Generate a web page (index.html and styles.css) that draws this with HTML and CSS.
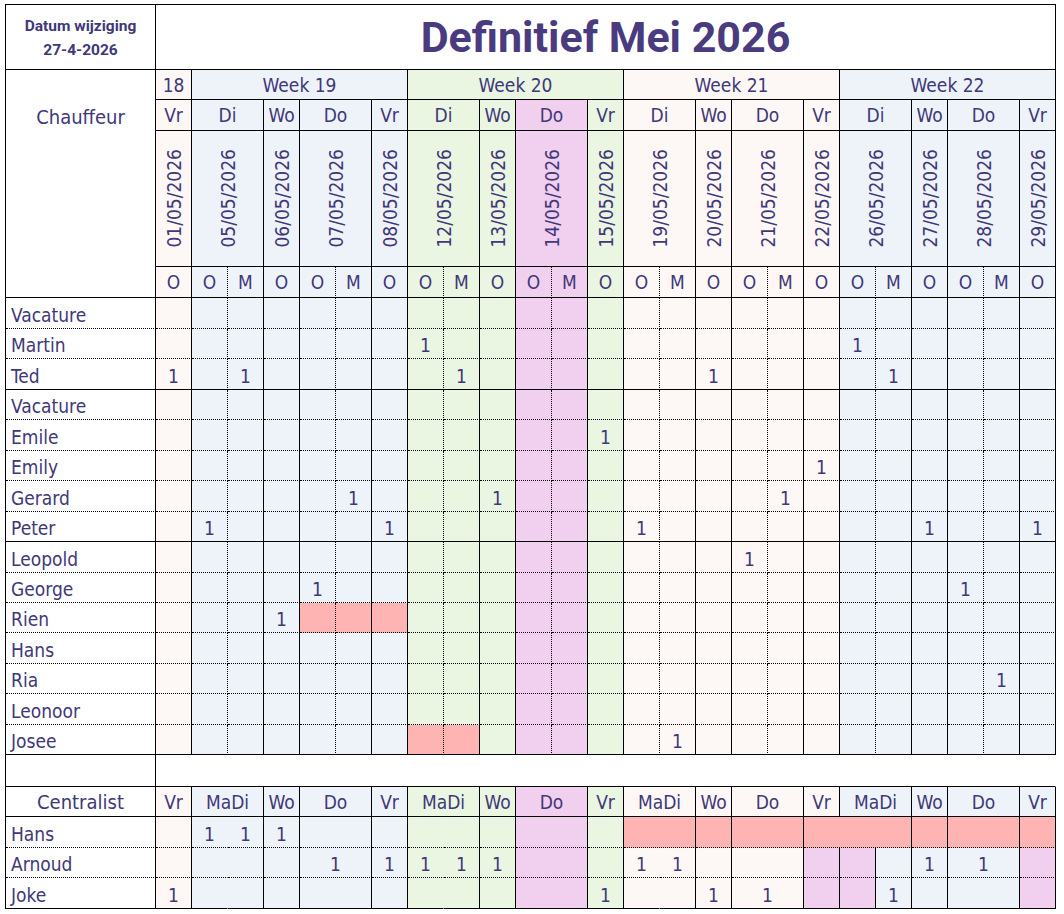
FILE: index.html
```html
<!DOCTYPE html>
<html lang="nl">
<head>
<meta charset="utf-8">
<title>Definitief Mei 2026</title>
<link rel="stylesheet" href="styles.css">
</head>
<body>
<div class="sheet">
  <div class="datum"><span>Datum wijziging</span><span>27-4-2026</span></div>
  <div class="title s25">Definitief Mei 2026</div>

  <div class="chauf">Chauffeur</div>
  <div class="pe">18</div><div class="bl s6">Week 19</div><div class="gr s6">Week 20</div><div class="pe s6">Week 21</div><div class="bl s6">Week 22</div>

  <div class="pe">Vr</div><div class="bl s2">Di</div><div class="bl">Wo</div><div class="bl s2">Do</div><div class="bl">Vr</div>
  <div class="gr s2">Di</div><div class="gr">Wo</div><div class="pk s2">Do</div><div class="gr">Vr</div>
  <div class="pe s2">Di</div><div class="pe">Wo</div><div class="pe s2">Do</div><div class="pe">Vr</div>
  <div class="bl s2">Di</div><div class="bl">Wo</div><div class="bl s2">Do</div><div class="bl">Vr</div>

  <div class="pe d"><span>01/05/2026</span></div><div class="bl s2 d"><span>05/05/2026</span></div><div class="bl d"><span>06/05/2026</span></div><div class="bl s2 d"><span>07/05/2026</span></div><div class="bl d"><span>08/05/2026</span></div>
  <div class="gr s2 d"><span>12/05/2026</span></div><div class="gr d"><span>13/05/2026</span></div><div class="pk s2 d"><span>14/05/2026</span></div><div class="gr d"><span>15/05/2026</span></div>
  <div class="pe s2 d"><span>19/05/2026</span></div><div class="pe d"><span>20/05/2026</span></div><div class="pe s2 d"><span>21/05/2026</span></div><div class="pe d"><span>22/05/2026</span></div>
  <div class="bl s2 d"><span>26/05/2026</span></div><div class="bl d"><span>27/05/2026</span></div><div class="bl s2 d"><span>28/05/2026</span></div><div class="bl d"><span>29/05/2026</span></div>

  <div class="pe">O</div><div class="bl dv">O</div><div class="bl">M</div><div class="bl">O</div><div class="bl dv">O</div><div class="bl">M</div><div class="bl">O</div>
  <div class="gr dv">O</div><div class="gr">M</div><div class="gr">O</div><div class="pk dv">O</div><div class="pk">M</div><div class="gr">O</div>
  <div class="pe dv">O</div><div class="pe">M</div><div class="pe">O</div><div class="pe dv">O</div><div class="pe">M</div><div class="pe">O</div>
  <div class="bl dv">O</div><div class="bl">M</div><div class="bl">O</div><div class="bl dv">O</div><div class="bl">M</div><div class="bl">O</div>

  <div class="row dr"><div>Vacature</div><div></div><div></div><div></div><div></div><div></div><div></div><div></div><div></div><div></div><div></div><div></div><div></div><div></div><div></div><div></div><div></div><div></div><div></div><div></div><div></div><div></div><div></div><div></div><div></div><div></div></div>
  <div class="row dr"><div>Martin</div><div></div><div></div><div></div><div></div><div></div><div></div><div></div><div>1</div><div></div><div></div><div></div><div></div><div></div><div></div><div></div><div></div><div></div><div></div><div></div><div>1</div><div></div><div></div><div></div><div></div><div></div></div>
  <div class="row dr end"><div>Ted</div><div>1</div><div></div><div>1</div><div></div><div></div><div></div><div></div><div></div><div>1</div><div></div><div></div><div></div><div></div><div></div><div></div><div>1</div><div></div><div></div><div></div><div></div><div>1</div><div></div><div></div><div></div><div></div></div>
  <div class="row dr"><div>Vacature</div><div></div><div></div><div></div><div></div><div></div><div></div><div></div><div></div><div></div><div></div><div></div><div></div><div></div><div></div><div></div><div></div><div></div><div></div><div></div><div></div><div></div><div></div><div></div><div></div><div></div></div>
  <div class="row dr"><div>Emile</div><div></div><div></div><div></div><div></div><div></div><div></div><div></div><div></div><div></div><div></div><div></div><div></div><div>1</div><div></div><div></div><div></div><div></div><div></div><div></div><div></div><div></div><div></div><div></div><div></div><div></div></div>
  <div class="row dr"><div>Emily</div><div></div><div></div><div></div><div></div><div></div><div></div><div></div><div></div><div></div><div></div><div></div><div></div><div></div><div></div><div></div><div></div><div></div><div></div><div>1</div><div></div><div></div><div></div><div></div><div></div><div></div></div>
  <div class="row dr"><div>Gerard</div><div></div><div></div><div></div><div></div><div></div><div>1</div><div></div><div></div><div></div><div>1</div><div></div><div></div><div></div><div></div><div></div><div></div><div></div><div>1</div><div></div><div></div><div></div><div></div><div></div><div></div><div></div></div>
  <div class="row dr end"><div>Peter</div><div></div><div>1</div><div></div><div></div><div></div><div></div><div>1</div><div></div><div></div><div></div><div></div><div></div><div></div><div>1</div><div></div><div></div><div></div><div></div><div></div><div></div><div></div><div>1</div><div></div><div></div><div>1</div></div>
  <div class="row dr"><div>Leopold</div><div></div><div></div><div></div><div></div><div></div><div></div><div></div><div></div><div></div><div></div><div></div><div></div><div></div><div></div><div></div><div></div><div>1</div><div></div><div></div><div></div><div></div><div></div><div></div><div></div><div></div></div>
  <div class="row dr"><div>George</div><div></div><div></div><div></div><div></div><div>1</div><div></div><div></div><div></div><div></div><div></div><div></div><div></div><div></div><div></div><div></div><div></div><div></div><div></div><div></div><div></div><div></div><div></div><div>1</div><div></div><div></div></div>
  <div class="row dr"><div>Rien</div><div></div><div></div><div></div><div>1</div><div class="rd"></div><div class="rd"></div><div class="rd"></div><div></div><div></div><div></div><div></div><div></div><div></div><div></div><div></div><div></div><div></div><div></div><div></div><div></div><div></div><div></div><div></div><div></div><div></div></div>
  <div class="row dr"><div>Hans</div><div></div><div></div><div></div><div></div><div></div><div></div><div></div><div></div><div></div><div></div><div></div><div></div><div></div><div></div><div></div><div></div><div></div><div></div><div></div><div></div><div></div><div></div><div></div><div></div><div></div></div>
  <div class="row dr"><div>Ria</div><div></div><div></div><div></div><div></div><div></div><div></div><div></div><div></div><div></div><div></div><div></div><div></div><div></div><div></div><div></div><div></div><div></div><div></div><div></div><div></div><div></div><div></div><div></div><div>1</div><div></div></div>
  <div class="row dr"><div>Leonoor</div><div></div><div></div><div></div><div></div><div></div><div></div><div></div><div></div><div></div><div></div><div></div><div></div><div></div><div></div><div></div><div></div><div></div><div></div><div></div><div></div><div></div><div></div><div></div><div></div><div></div></div>
  <div class="row dr end"><div>Josee</div><div></div><div></div><div></div><div></div><div></div><div></div><div></div><div class="rd"></div><div class="rd"></div><div></div><div></div><div></div><div></div><div></div><div>1</div><div></div><div></div><div></div><div></div><div></div><div></div><div></div><div></div><div></div><div></div></div>

  <div class="row"><div></div><div class="s25 empty"></div></div>

  <div class="row"><div class="big">Centralist</div><div class="pe">Vr</div><div class="bl s2">MaDi</div><div class="bl">Wo</div><div class="bl s2">Do</div><div class="bl">Vr</div><div class="gr s2">MaDi</div><div class="gr">Wo</div><div class="pk s2">Do</div><div class="gr">Vr</div><div class="pe s2">MaDi</div><div class="pe">Wo</div><div class="pe s2">Do</div><div class="pe">Vr</div><div class="bl s2">MaDi</div><div class="bl">Wo</div><div class="bl s2">Do</div><div class="bl">Vr</div></div>
  <div class="row cr"><div class="nm">Hans</div><div class="pe"></div><div class="bl nb">1</div><div class="bl">1</div><div class="bl">1</div><div class="bl s2"></div><div class="bl"></div><div class="gr nb"></div><div class="gr"></div><div class="gr"></div><div class="pk s2"></div><div class="gr"></div><div class="rd s2"></div><div class="rd"></div><div class="rd s2"></div><div class="rd s3"></div><div class="rd"></div><div class="rd s2"></div><div class="rd"></div></div>
  <div class="row cr"><div class="nm">Arnoud</div><div class="pe"></div><div class="bl nb"></div><div class="bl"></div><div class="bl"></div><div class="bl s2">1</div><div class="bl">1</div><div class="gr nb">1</div><div class="gr">1</div><div class="gr">1</div><div class="pk s2"></div><div class="gr"></div><div class="pe nb">1</div><div class="pe">1</div><div class="pe"></div><div class="pe s2"></div><div class="pk"></div><div class="pk"></div><div class="bl"></div><div class="bl">1</div><div class="bl s2">1</div><div class="pk"></div></div>
  <div class="row cr end"><div class="nm">Joke</div><div class="pe">1</div><div class="bl nb"></div><div class="bl"></div><div class="bl"></div><div class="bl s2"></div><div class="bl"></div><div class="gr nb"></div><div class="gr"></div><div class="gr"></div><div class="pk s2"></div><div class="gr">1</div><div class="pe nb"></div><div class="pe"></div><div class="pe">1</div><div class="pe s2">1</div><div class="pk"></div><div class="pk"></div><div class="bl">1</div><div class="bl"></div><div class="bl s2"></div><div class="pk"></div></div>
</div>
</body>
</html>
```

FILE: styles.css
```css
body {
  margin: 0;
  background: #ffffff;
  color: #403878;
  font-family: "DejaVu Sans Condensed", "DejaVu Sans", sans-serif;
  font-stretch: condensed;
  font-size: 19px;
}

.sheet {
  display: grid;
  width: max-content;
  margin: 4px 0 0 5px;
  border-left: 1px solid #000;
  border-top: 1px solid #000;
  grid-template-columns: 150px repeat(25, 36px);
  grid-template-rows:
    65px 30px 31px 136px 31px
    31px 30px 31px 30px 31px 30px 31px 30px 31px 30px 30px 31px 30px 31px 30px
    32px
    30px 31px 30px 31px;
}

.sheet > div,
.row > div {
  box-sizing: border-box;
  min-width: 0;
  white-space: nowrap;
  display: flex;
  align-items: center;
  justify-content: center;
  border-right: 1px solid #000;
  border-bottom: 1px solid #000;
}

.sheet > .row {
  display: contents;
}

.s2 { grid-column: span 2; }
.s3 { grid-column: span 3; }
.s6 { grid-column: span 6; }
.s25 { grid-column: span 25; }

.pe { background: #fdf8f5; }
.bl { background: #eef3fa; }
.gr { background: #eaf6e2; }
.pk { background: #f1cfee; }

.sheet > .dv { border-right-style: dotted; }

.sheet > .datum {
  flex-direction: column;
  padding-top: 2px;
  font-family: Roboto, "Liberation Sans", sans-serif;
  font-stretch: normal;
  font-weight: 700;
  font-size: 15.5px;
  line-height: 24.5px;
}

.sheet > .title {
  font-family: Roboto, "Liberation Sans", sans-serif;
  font-stretch: normal;
  font-weight: 700;
  font-size: 43px;
  color: #4a3b7f;
}

.sheet > .chauf {
  grid-column: 1;
  grid-row: 2 / span 4;
  align-items: flex-start;
  padding-top: 35px;
  font-size: 20px;
}

.d span {
  writing-mode: vertical-rl;
  transform: rotate(180deg);
}

/* driver rows */
.dr > div {
  align-items: flex-end;
  padding-bottom: 2px;
  border-bottom-style: dotted;
}
.dr.end > div { border-bottom-style: solid; }
.dr > :nth-child(2),
.dr > :nth-child(n+15):nth-child(-n+20) { background: #fdf8f5; }
.dr > :nth-child(n+3):nth-child(-n+8),
.dr > :nth-child(n+21) { background: #eef3fa; }
.dr > :nth-child(n+9):nth-child(-n+14) { background: #eaf6e2; }
.dr > :nth-child(n+12):nth-child(-n+13) { background: #f1cfee; }
.dr > :nth-child(3n) { border-right-style: dotted; }
.dr > :first-child {
  justify-content: flex-start;
  padding-left: 5px;
  background: #ffffff;
}

.sheet .row > div.rd { background: #ffb4b4; }

.row > .empty { border-right-color: transparent; }

.row > .big { font-size: 20px; }

/* centralist rows */
.cr > div {
  align-items: flex-end;
  padding-bottom: 2px;
  border-bottom-style: dotted;
}
.cr.end > div { border-bottom-style: solid; }
.cr > .nm {
  justify-content: flex-start;
  padding-left: 5px;
}
.cr > .nb { border-right-color: transparent; }
```
